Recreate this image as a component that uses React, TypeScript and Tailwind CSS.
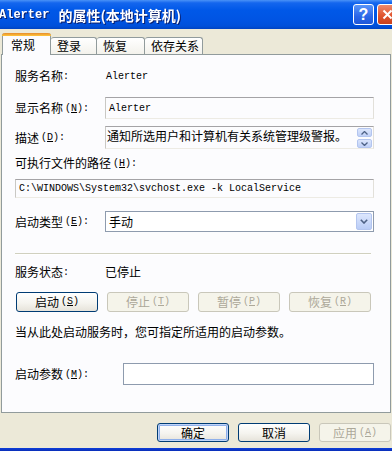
import type { ReactNode } from 'react';
import clsx from 'clsx';

const CJK = "font-['Noto_Sans_CJK_SC','Noto_Sans_CJK_JP',sans-serif]";

function Mono({ children, className }: { children: ReactNode; className?: string }) {
  return <span className={clsx("font-['Liberation_Mono',monospace] text-[10px]", className)}>{children}</span>;
}

// 访问键: (N) 里的字母带下划线
function Key({ k }: { k: string }) {
  return (
    <Mono className="ml-[2px]">
      (<span className="underline">{k}</span>)
    </Mono>
  );
}

function Label({ text, k, className }: { text: string; k?: string; className?: string }) {
  return (
    <div className={clsx('shrink-0 flex items-center', className)}>
      <span>{text}</span>
      {k && <Key k={k} />}
      <Mono>:</Mono>
    </div>
  );
}

function XPButton(props: { children: ReactNode; disabled?: boolean; focused?: boolean; className?: string }) {
  const { children, disabled, focused, className } = props;
  return (
    <div
      className={clsx(
        'flex items-center justify-center rounded-[3px] border leading-none',
        disabled
          ? 'border-[#C9C7BA] bg-[#F5F4EA] text-[#ACA899]'
          : 'border-[#003C74] bg-[linear-gradient(to_bottom,#FFFFFF_0%,#F5F4EF_55%,#E6E3DA_100%)] text-black',
        focused && 'shadow-[inset_0_0_0_1px_#C0D4F8,inset_0_0_0_2px_#8FB0EA]',
        className
      )}
    >
      {children}
    </div>
  );
}

function ReadBox({ children, className }: { children: ReactNode; className?: string }) {
  return (
    <div
      className={clsx(
        'flex items-center border-t border-l border-b border-r border-t-[#A4A3A6] border-l-[#C9C8C4] border-b-[#EDEBE4] border-r-[#E2E0DA] bg-[#FCFCFE]',
        className
      )}
    >
      {children}
    </div>
  );
}

function ScrollBtn({ up }: { up?: boolean }) {
  return (
    <div className="w-[15px] h-[9px] rounded-[2px] border border-[#B3C5EF] bg-[linear-gradient(to_bottom,#DCE6FC,#BFD0F7)] flex items-center justify-center">
      <svg width="7" height="4" viewBox="0 0 7 4">
        <path d={up ? 'M0.5 3.5 L3.5 0.5 L6.5 3.5' : 'M0.5 0.5 L3.5 3.5 L6.5 0.5'} stroke="#4D6185" strokeWidth="1.3" fill="none" />
      </svg>
    </div>
  );
}

export default function App() {
  return (
    <div className={clsx('w-[392px] h-[451px] overflow-hidden flex flex-col bg-[#ECE9D8] text-[12px] text-black', CJK)}>
      {/* 标题栏 */}
      <div className="h-[29px] shrink-0 flex items-center bg-[linear-gradient(to_bottom,#4A92F7_0%,#1466EE_10%,#0058E8_35%,#0054E3_70%,#0050DA_90%,#0043C2_100%)]">
        <div className="flex-1 min-w-0 flex items-center text-white font-bold ml-[-1px] drop-shadow-[1px_1px_0_#0A1F6E]">
          <span className="font-['Liberation_Mono',monospace] text-[12px]">Alerter</span>
          <span className="ml-[9px] text-[14px] leading-none">的属性(本地计算机)</span>
        </div>
        <div className="w-[21px] h-[21px] shrink-0 rounded-[3px] border border-white bg-[linear-gradient(to_bottom,#5A95F8,#2A66E8_60%,#1F58D8)] flex items-center justify-center text-white font-bold text-[16px] leading-none font-['Liberation_Sans',sans-serif]">
          ?
        </div>
        <div className="w-[21px] h-[21px] shrink-0 ml-[3px] mr-[-6px] rounded-[3px] border border-white bg-[linear-gradient(to_bottom,#EE8A6C,#E0552F_55%,#C9411C)] flex items-center justify-center">
          <svg width="11" height="11" viewBox="0 0 11 11">
            <path d="M1.5 1.5 L9.5 9.5 M9.5 1.5 L1.5 9.5" stroke="#fff" strokeWidth="2" />
          </svg>
        </div>
      </div>

      {/* 选项卡 */}
      <div className="mt-[4px] h-[21px] shrink-0 flex items-end pl-[2px]">
        <div className="relative h-[22px] w-[49px] -mb-px rounded-t-[3px] border-x border-[#919B9C] bg-[#FCFCFE] flex flex-col">
          <div className="h-[3px] rounded-t-[3px] bg-[linear-gradient(to_bottom,#E68B2C,#FFC73C)] -mx-px" />
          <div className="flex-1 flex items-center pl-[8px] pb-[1px]">常规</div>
        </div>
        <div className="h-[17px] w-[46px] rounded-t-[3px] border-t border-r border-[#919B9C] bg-[linear-gradient(to_bottom,#FFFFFF,#F3F2EC)] flex items-center pl-[6px]">
          登录
        </div>
        <div className="h-[17px] w-[48px] rounded-t-[3px] border-t border-r border-[#919B9C] bg-[linear-gradient(to_bottom,#FFFFFF,#F3F2EC)] flex items-center pl-[6px]">
          恢复
        </div>
        <div className="h-[17px] w-[58px] rounded-t-[3px] border-t border-r border-[#919B9C] bg-[linear-gradient(to_bottom,#FFFFFF,#F3F2EC)] flex items-center pl-[6px]">
          依存关系
        </div>
      </div>

      {/* 常规面板 */}
      <div className="h-[359px] shrink-0 ml-[1px] w-[390px] border border-[#919B9C] bg-[#FCFCFE] flex flex-col pl-[13px] pr-[16px]">
        <div className="mt-[13px] h-[16px] flex items-center">
          <Label text="服务名称" className="w-[90px]" />
          <Mono className="ml-[1px]">Alerter</Mono>
        </div>

        <div className="mt-[13px] h-[22px] flex items-center">
          <Label text="显示名称" k="N" className="w-[90px]" />
          <ReadBox className="flex-1 h-full items-start pl-[3px] pt-[3px]">
            <Mono>Alerter</Mono>
          </ReadBox>
        </div>

        <div className="mt-[7px] h-[23px] flex items-center">
          <Label text="描述" k="D" className="w-[90px]" />
          <ReadBox className="flex-1 h-full items-start justify-between pl-[1px]">
            <span className="leading-[15px] mt-[1px]">通知所选用户和计算机有关系统管理级警报。</span>
            <div className="flex flex-col gap-[2px] pt-[1px] pr-[1px]">
              <ScrollBtn up />
              <ScrollBtn />
            </div>
          </ReadBox>
        </div>

        <div className="mt-[6px] h-[16px] flex items-center">
          <Label text="可执行文件的路径" k="H" />
        </div>

        <ReadBox className="mt-[8px] h-[19px] pl-[3px]">
          <Mono>C:\WINDOWS\System32\svchost.exe -k LocalService</Mono>
        </ReadBox>

        <div className="mt-[13px] h-[21px] flex items-center">
          <Label text="启动类型" k="E" className="w-[90px]" />
          <div className="flex-1 h-full border border-[#8E9BAE] bg-white flex items-center justify-between pl-[3px] pr-[1px]">
            <span>手动</span>
            <div className="w-[16px] h-[17px] rounded-[2px] border border-[#B3C5EF] bg-[linear-gradient(to_bottom,#DDE7FD,#B9CCF6)] flex items-center justify-center">
              <svg width="8" height="5" viewBox="0 0 8 5">
                <path d="M0.8 0.8 L4 4 L7.2 0.8" stroke="#4D6185" strokeWidth="1.6" fill="none" />
              </svg>
            </div>
          </div>
        </div>

        <div className="mt-[21px] mr-[3px] h-[2px] border-t border-b border-t-[#D0D0BF] border-b-white" />

        <div className="mt-[9px] h-[16px] flex items-center">
          <Label text="服务状态" className="w-[90px]" />
          <span>已停止</span>
        </div>

        <div className="mt-[12px] h-[20px] flex gap-[9px] pl-[1px]">
          <XPButton className="w-[82px]">
            启动<Key k="S" />
          </XPButton>
          <XPButton disabled className="w-[82px]">
            停止<Key k="T" />
          </XPButton>
          <XPButton disabled className="w-[82px]">
            暂停<Key k="P" />
          </XPButton>
          <XPButton disabled className="w-[82px]">
            恢复<Key k="R" />
          </XPButton>
        </div>

        <div className="mt-[12px] h-[16px] flex items-center">当从此处启动服务时，您可指定所适用的启动参数。</div>

        <div className="mt-[23px] h-[22px] flex items-center">
          <Label text="启动参数" k="M" className="w-[108px]" />
          <div className="flex-1 h-full border border-[#8E9BAE] bg-white" />
        </div>
      </div>

      {/* 底部按钮 */}
      <div className="mt-[10px] h-[19px] shrink-0 flex justify-end gap-[9px] pr-[1px]">
        <XPButton focused className="w-[72px]">
          确定
        </XPButton>
        <XPButton className="w-[72px]">取消</XPButton>
        <XPButton disabled className="w-[72px]">
          应用<Key k="A" />
        </XPButton>
      </div>

      <div className="flex-1" />
      <div className="h-[3px] shrink-0 bg-[linear-gradient(to_bottom,#0D3ED9,#0A2FB8)]" />
    </div>
  );
}
